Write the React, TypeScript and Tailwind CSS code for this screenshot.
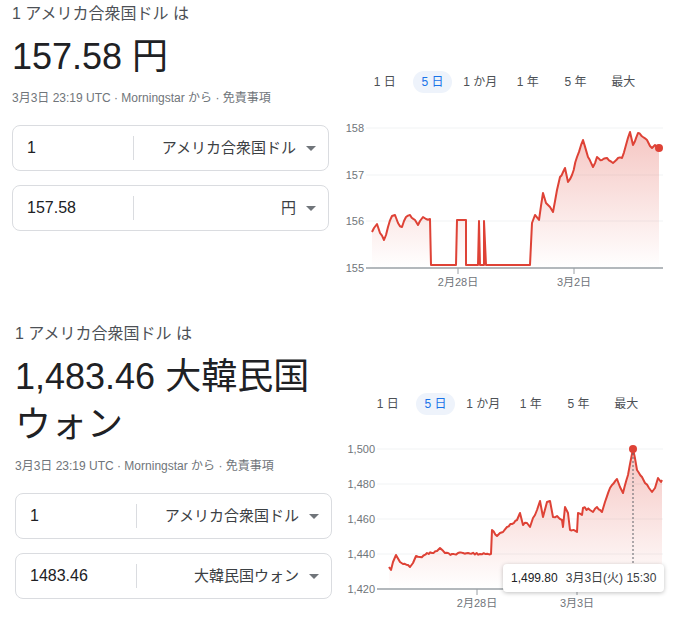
import React from "react";

type Pt = [number, number];

const RED = "#de4236";

function jagged(pts: Pt[], flat: number[], amp: number, seed: number): Pt[] {
  const out: Pt[] = [];
  let k = seed;
  for (let i = 0; i < pts.length; i++) {
    const [x, y] = pts[i];
    out.push([x, y]);
    const n = pts[i + 1];
    if (!n) break;
    const dx = n[0] - x;
    if (dx < 3 || (y === n[1] && flat.includes(y))) continue;
    const steps = Math.floor(dx / 1.6);
    for (let s = 1; s < steps; s++) {
      const t = s / steps;
      const r = Math.sin(++k * 78.233) * 43758.5453;
      const f = (r - Math.floor(r)) * 2 - 1;
      out.push([x + dx * t, y + (n[1] - y) * t + f * amp]);
    }
  }
  return out;
}

const toD = (pts: Pt[]) =>
  pts.map((p, i) => (i ? "L" : "M") + p[0].toFixed(1) + " " + p[1].toFixed(1)).join(" ");

// chart 1: USD -> JPY (page coordinates)
const jpy: Pt[] = [
  [372, 232], [374, 228], [377, 224], [380, 233], [384, 240], [386, 235], [388, 227],
  [392, 216], [395, 215], [398, 223], [402, 227], [406, 217], [410, 215], [415, 220],
  [418, 225], [420, 221], [423, 217], [426, 219], [430, 219], [431, 265], [456, 265],
  [457, 220], [466, 220], [466, 265], [478, 265], [479, 221], [480, 265], [484, 265],
  [484, 221], [486, 265], [530, 265], [532, 223], [535, 215], [539, 220], [543, 193],
  [546, 203], [550, 207], [553, 212], [557, 190], [560, 177], [565, 168], [568, 182],
  [572, 175], [577, 157], [583, 140], [588, 157], [593, 167], [597, 157], [602, 160],
  [607, 158], [613, 163], [618, 158], [622, 158], [626, 145], [630, 132], [633, 145],
  [638, 133], [643, 137], [647, 140], [650, 146], [652, 148], [655, 145], [659, 148],
];

// chart 2: USD -> KRW
const krw: Pt[] = [
  [389, 567], [391, 570], [393, 562], [396, 555], [400, 562], [403, 564], [408, 565],
  [410, 567], [413, 563], [416, 556], [420, 557], [427, 553], [432, 553], [437, 551],
  [440, 548], [445, 553], [452, 554], [458, 553], [463, 553], [468, 553], [480, 554],
  [491, 554], [492, 530], [497, 536], [500, 533], [503, 532], [507, 527], [512, 524],
  [517, 520], [520, 513], [523, 525], [527, 523], [530, 527], [533, 518], [537, 510],
  [540, 501], [543, 517], [547, 502], [550, 501], [553, 517], [557, 516], [562, 520],
  [563, 527], [565, 507], [568, 513], [570, 530], [577, 532], [578, 513], [582, 515],
  [583, 508], [590, 510], [593, 512], [597, 507], [602, 512], [605, 502], [610, 488],
  [617, 479], [620, 487], [623, 493], [628, 475], [633, 449], [637, 470], [642, 477],
  [645, 483], [649, 488], [652, 492], [655, 488], [658, 478], [661, 482], [662, 480],
];

type ChartProps = {
  id: string;
  vb: [number, number, number, number];
  yTicks: { label: string; y: number }[];
  labelRight: number;
  axisX0: number;
  axisY: number;
  xTicks: { label: string; x: number }[];
  line: Pt[];
  flat: number[];
  dot: Pt;
  seed: number;
  children?: React.ReactNode;
};

function Chart({ id, vb, yTicks, labelRight, axisX0, axisY, xTicks, line, flat, dot, seed, children }: ChartProps) {
  const pts = jagged(line, flat, 1.3, seed);
  const d = toD(pts);
  const area = d + ` L${pts[pts.length - 1][0]} ${axisY} L${pts[0][0]} ${axisY} Z`;
  return (
    <div className="mt-[17px]">
      <svg width={vb[2]} height={vb[3]} viewBox={vb.join(" ")} className="block">
        <defs>
          <linearGradient id={id} x1="0" y1="0" x2="0" y2="1">
            <stop offset="0" stopColor={RED} stopOpacity="0.3" />
            <stop offset="1" stopColor={RED} stopOpacity="0" />
          </linearGradient>
        </defs>
        {yTicks.map((t) => (
          <g key={t.label}>
            {t.y !== axisY && (
              <line x1={axisX0} x2={663} y1={t.y} y2={t.y} stroke="#f1f3f4" strokeWidth="1" />
            )}
            <text x={labelRight} y={t.y + 4} textAnchor="end" fontSize="11" fill="#70757a">
              {t.label}
            </text>
          </g>
        ))}
        <path d={area} fill={`url(#${id})`} />
        <path d={d} fill="none" stroke={RED} strokeWidth="2" strokeLinejoin="round" />
        <line x1={axisX0} x2={663} y1={axisY} y2={axisY} stroke="#9aa0a6" strokeWidth="1.5" />
        {xTicks.map((t) => (
          <g key={t.label}>
            <line x1={t.x} x2={t.x} y1={axisY} y2={axisY + 6} stroke="#9aa0a6" strokeWidth="1" />
            <text x={t.x} y={axisY + 18} textAnchor="middle" fontSize="11" fill="#70757a">
              {t.label}
            </text>
          </g>
        ))}
        {children}
        <circle cx={dot[0]} cy={dot[1]} r="4" fill={RED} />
      </svg>
    </div>
  );
}

function Tabs() {
  const tabs = ["1 日", "5 日", "1 か月", "1 年", "5 年", "最大"];
  return (
    <div className="ml-[24px] grid h-[22px] w-[286px] grid-cols-6 whitespace-nowrap text-[12px] leading-[22px] text-[#4d5156]">
      {tabs.map((t) => (
        <div key={t} className="flex justify-center">
          <span
            className={
              t === "5 日"
                ? "rounded-full bg-[#eef3fb] px-[8px] text-[#1a73e8]"
                : "px-[8px]"
            }
          >
            {t}
          </span>
        </div>
      ))}
    </div>
  );
}

function Caret() {
  return (
    <svg width="10" height="5" viewBox="0 0 10 5" className="block">
      <path d="M0 0 L10 0 L5 5 Z" fill="#70757a" />
    </svg>
  );
}

function Field({ value, unit }: { value: string; unit: string }) {
  return (
    <div className="flex h-[46px] items-center rounded-[8px] border border-[#dadce0]">
      <div className="w-[120px] pl-[14px] text-[16px] text-[#202124]">{value}</div>
      <div className="h-[24px] w-px bg-[#dadce0]" />
      <div className="flex flex-1 items-center justify-end gap-[10px] pr-[12px] text-[15px] text-[#3c4043]">
        <span>{unit}</span>
        <Caret />
      </div>
    </div>
  );
}

function Converter({ amount, big, unit }: { amount: string; big: React.ReactNode; unit: string }) {
  return (
    <div className="ml-[12px] w-[317px]">
      <div className="text-[16px] leading-[24px] text-[#4d5156]">1 アメリカ合衆国ドル は</div>
      <div className="mt-[7px] text-[36px] leading-[48px] text-[#202124]">{big}</div>
      <div className="mt-[9px] text-[12px] leading-[16px] text-[#70757a]">
        3月3日 23:19 UTC · Morningstar から · 免責事項
      </div>
      <div className="mt-[19px] flex flex-col gap-[14px]">
        <Field value="1" unit="アメリカ合衆国ドル" />
        <Field value={amount} unit={unit} />
      </div>
    </div>
  );
}

export default function App() {
  return (
    <div className="h-[623px] w-[677px] overflow-hidden bg-white font-['Liberation_Sans','Noto_Sans_CJK_JP',sans-serif]">
      <section className="flex h-[322px] pt-[2px]">
        <Converter amount="157.58" unit="円" big="157.58 円" />
        <div className="ml-[8px] w-[340px] pt-[69px]">
          <Tabs />
          <Chart
            id="g1"
            vb={[337, 110, 340, 180]}
            yTicks={[
              { label: "158", y: 128 },
              { label: "157", y: 175 },
              { label: "156", y: 221 },
              { label: "155", y: 268 },
            ]}
            labelRight={364}
            axisX0={366}
            axisY={268}
            xTicks={[
              { label: "2月28日", x: 458 },
              { label: "3月2日", x: 574 },
            ]}
            line={jpy}
            flat={[265, 220, 221]}
            dot={[659, 148]}
            seed={3}
          />
        </div>
      </section>
      <section className="flex pl-[3px]">
        <Converter
          amount="1483.46"
          unit="大韓民国ウォン"
          big={
            <>
              1,483.46 大韓民国
              <br />
              ウォン
            </>
          }
        />
        <div className="ml-[8px] w-[337px] pt-[71px]">
          <Tabs />
          <Chart
            id="g2"
            vb={[340, 432, 337, 180]}
            yTicks={[
              { label: "1,500", y: 449 },
              { label: "1,480", y: 484 },
              { label: "1,460", y: 519 },
              { label: "1,440", y: 554 },
              { label: "1,420", y: 589 },
            ]}
            labelRight={375}
            axisX0={377}
            axisY={589}
            xTicks={[
              { label: "2月28日", x: 477 },
              { label: "3月3日", x: 577 },
            ]}
            line={krw}
            flat={[]}
            dot={[633, 449]}
            seed={11}
          >
            <line x1={633} x2={633} y1={449} y2={564} stroke="#5f6368" strokeWidth="1" strokeDasharray="2 2" />
          </Chart>
          <div className="relative">
            <div className="absolute left-[163px] top-[-48px] flex h-[28px] items-center gap-[8px] whitespace-nowrap rounded-[4px] bg-white px-[8px] text-[12px] text-[#202124] shadow-[0_1px_4px_rgba(0,0,0,0.25)]">
              <span>1,499.80</span>
              <span className="text-[#3c4043]">3月3日(火) 15:30</span>
            </div>
          </div>
        </div>
      </section>
    </div>
  );
}
